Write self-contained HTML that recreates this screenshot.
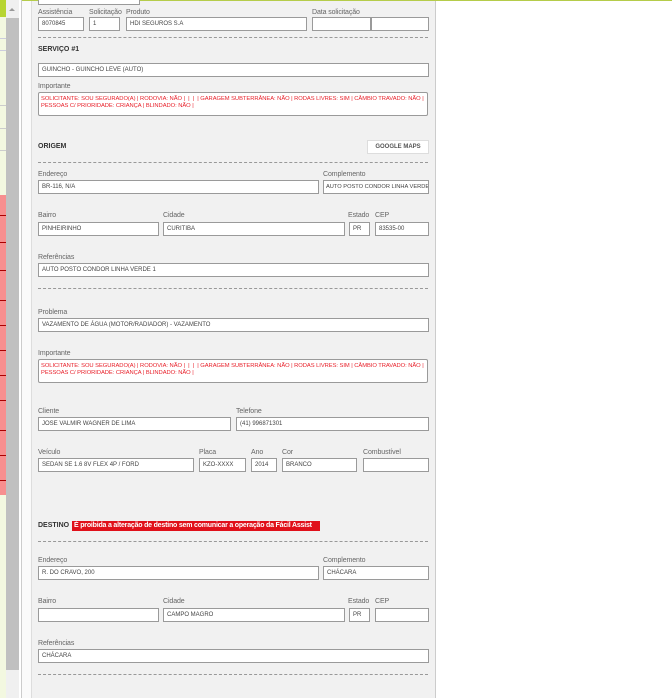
<!DOCTYPE html>
<html><head><meta charset="utf-8"><style>
*{margin:0;padding:0;box-sizing:border-box}
body{width:672px;height:698px;overflow:hidden;background:#fff;font-family:"Liberation Sans",sans-serif;position:relative}
.a{position:absolute}
.l{position:absolute;font-size:7px;color:#666;line-height:8px;white-space:nowrap;letter-spacing:-0.1px}
.i{position:absolute;height:14px;background:#fff;border:1px solid #9a9a9a;font-size:6px;color:#444;line-height:12px;padding-left:3px;white-space:nowrap;overflow:hidden}
.t{position:absolute;height:24px;background:#fff;border:1px solid #9a9a9a;border-radius:2px;font-size:5.8px;color:#e8202a;line-height:7px;padding:3px 2px;left:38px;width:390px;white-space:nowrap;overflow:hidden;letter-spacing:-0.05px}
.d{position:absolute;left:38px;width:390px;border-top:1px dashed #999;height:0}
.h{position:absolute;font-size:7px;font-weight:bold;color:#333;left:38px}
</style></head><body>
<div class="a" style="left:0;top:0;width:6px;height:698px;background:#f3f8e0"></div>
<div class="a" style="left:0;top:0;width:6px;height:17px;background:#b7d531"></div>
<div class="a" style="left:0;top:38px;width:6px;height:1px;background:#ccd"></div>
<div class="a" style="left:0;top:50px;width:6px;height:1px;background:#ccd"></div>
<div class="a" style="left:0;top:105px;width:6px;height:1px;background:#ccc"></div>
<div class="a" style="left:0;top:128px;width:6px;height:1px;background:#ccc"></div>
<div class="a" style="left:0;top:150px;width:6px;height:1px;background:#ccc"></div>
<div class="a" style="left:0;top:195px;width:6px;height:300px;background:#f78f8f"></div>
<div class="a" style="left:0;top:215px;width:6px;height:1px;background:#a00"></div>
<div class="a" style="left:0;top:242px;width:6px;height:1px;background:#a00"></div>
<div class="a" style="left:0;top:270px;width:6px;height:1px;background:#a00"></div>
<div class="a" style="left:0;top:300px;width:6px;height:1px;background:#a00"></div>
<div class="a" style="left:0;top:325px;width:6px;height:1px;background:#a00"></div>
<div class="a" style="left:0;top:350px;width:6px;height:1px;background:#a00"></div>
<div class="a" style="left:0;top:375px;width:6px;height:1px;background:#a00"></div>
<div class="a" style="left:0;top:400px;width:6px;height:1px;background:#a00"></div>
<div class="a" style="left:0;top:430px;width:6px;height:1px;background:#a00"></div>
<div class="a" style="left:0;top:455px;width:6px;height:1px;background:#a00"></div>
<div class="a" style="left:0;top:480px;width:6px;height:1px;background:#a00"></div>
<div class="a" style="left:6px;top:0;width:13px;height:698px;background:#f0f0f0"></div>
<div class="a" style="left:6px;top:18px;width:13px;height:652px;background:#c0c0c0"></div>
<div class="a" style="left:9px;top:8px;width:0;height:0;border-left:3px solid transparent;border-right:3px solid transparent;border-bottom:3px solid #999"></div>
<div class="a" style="left:21px;top:0;width:1px;height:698px;background:#ccc"></div>
<div class="a" style="left:22px;top:0;width:9px;height:698px;background:#fafafa"></div>
<div class="a" style="left:31px;top:0;width:405px;height:698px;background:#f1f1f1;border-left:1px solid #ddd;border-right:1px solid #ccc"></div>
<div class="a" style="left:22px;top:0;width:650px;height:1px;background:#b5cc4a"></div>
<div class="i" style="left:38px;top:-9px;width:102px"></div>

<div class="l" style="left:38px;top:9px">Assistência</div>
<div class="l" style="left:89px;top:9px">Solicitação</div>
<div class="l" style="left:126px;top:9px">Produto</div>
<div class="l" style="left:312px;top:9px">Data solicitação</div>
<div class="i" style="left:38px;top:17px;width:46px">8070845</div>
<div class="i" style="left:89px;top:17px;width:31px">1</div>
<div class="i" style="left:126px;top:17px;width:181px">HDI SEGUROS S.A</div>
<div class="i" style="left:312px;top:17px;width:59px"></div>
<div class="i" style="left:371px;top:17px;width:58px"></div>
<div class="d" style="top:37px"></div>

<div class="h" style="top:46px">SERVIÇO #1</div>
<div class="i" style="left:38px;top:63px;width:391px">GUINCHO - GUINCHO LEVE (AUTO)</div>
<div class="l" style="left:38px;top:83px">Importante</div>
<div class="t" style="top:92px">SOLICITANTE: SOU SEGURADO(A) | RODOVIA: NÃO | &nbsp;| &nbsp;| &nbsp;| GARAGEM SUBTERRÂNEA: NÃO | RODAS LIVRES: SIM | CÂMBIO TRAVADO: NÃO |<br>PESSOAS C/ PRIORIDADE: CRIANÇA | BLINDADO: NÃO |</div>

<div class="h" style="top:143px">ORIGEM</div>
<div class="a" style="left:367px;top:140px;width:62px;height:14px;background:#fff;border:1px solid #ddd;font-size:6px;font-weight:bold;color:#555;text-align:center;line-height:12px">GOOGLE MAPS</div>
<div class="d" style="top:162px"></div>
<div class="l" style="left:38px;top:171px">Endereço</div>
<div class="l" style="left:323px;top:171px">Complemento</div>
<div class="i" style="left:38px;top:180px;width:281px">BR-116, N/A</div>
<div class="i" style="left:323px;top:180px;width:106px;font-size:5.7px;padding-left:2px">AUTO POSTO CONDOR LINHA VERDE</div>
<div class="l" style="left:38px;top:212px">Bairro</div>
<div class="l" style="left:163px;top:212px">Cidade</div>
<div class="l" style="left:348px;top:212px">Estado</div>
<div class="l" style="left:375px;top:212px">CEP</div>
<div class="i" style="left:38px;top:222px;width:121px">PINHEIRINHO</div>
<div class="i" style="left:163px;top:222px;width:182px">CURITIBA</div>
<div class="i" style="left:349px;top:222px;width:21px">PR</div>
<div class="i" style="left:375px;top:222px;width:54px">83535-00</div>
<div class="l" style="left:38px;top:254px">Referências</div>
<div class="i" style="left:38px;top:263px;width:391px">AUTO POSTO CONDOR LINHA VERDE 1</div>
<div class="d" style="top:288px"></div>

<div class="l" style="left:38px;top:309px">Problema</div>
<div class="i" style="left:38px;top:318px;width:391px">VAZAMENTO DE ÁGUA (MOTOR/RADIADOR) - VAZAMENTO</div>
<div class="l" style="left:38px;top:350px">Importante</div>
<div class="t" style="top:359px">SOLICITANTE: SOU SEGURADO(A) | RODOVIA: NÃO | &nbsp;| &nbsp;| &nbsp;| GARAGEM SUBTERRÂNEA: NÃO | RODAS LIVRES: SIM | CÂMBIO TRAVADO: NÃO |<br>PESSOAS C/ PRIORIDADE: CRIANÇA | BLINDADO: NÃO |</div>

<div class="l" style="left:38px;top:408px">Cliente</div>
<div class="l" style="left:236px;top:408px">Telefone</div>
<div class="i" style="left:38px;top:417px;width:193px">JOSE VALMIR WAGNER DE LIMA</div>
<div class="i" style="left:236px;top:417px;width:193px">(41) 996871301</div>
<div class="l" style="left:38px;top:449px">Veículo</div>
<div class="l" style="left:199px;top:449px">Placa</div>
<div class="l" style="left:251px;top:449px">Ano</div>
<div class="l" style="left:282px;top:449px">Cor</div>
<div class="l" style="left:363px;top:449px">Combustível</div>
<div class="i" style="left:38px;top:458px;width:156px">SEDAN SE 1.6 8V FLEX 4P / FORD</div>
<div class="i" style="left:199px;top:458px;width:47px">KZO-XXXX</div>
<div class="i" style="left:251px;top:458px;width:26px">2014</div>
<div class="i" style="left:282px;top:458px;width:75px">BRANCO</div>
<div class="i" style="left:363px;top:458px;width:66px"></div>

<div class="h" style="top:522px">DESTINO</div>
<div class="a" style="left:72px;top:521px;width:248px;height:10px;background:#e0101a;color:#fff;font-size:7px;font-weight:bold;line-height:10px;padding-left:2px;white-space:nowrap;letter-spacing:-0.2px">É proibida a alteração de destino sem comunicar a operação da Fácil Assist</div>
<div class="d" style="top:541px"></div>
<div class="l" style="left:38px;top:557px">Endereço</div>
<div class="l" style="left:323px;top:557px">Complemento</div>
<div class="i" style="left:38px;top:566px;width:281px">R. DO CRAVO, 200</div>
<div class="i" style="left:323px;top:566px;width:106px">CHÁCARA</div>
<div class="l" style="left:38px;top:598px">Bairro</div>
<div class="l" style="left:163px;top:598px">Cidade</div>
<div class="l" style="left:348px;top:598px">Estado</div>
<div class="l" style="left:375px;top:598px">CEP</div>
<div class="i" style="left:38px;top:608px;width:121px"></div>
<div class="i" style="left:163px;top:608px;width:182px">CAMPO MAGRO</div>
<div class="i" style="left:349px;top:608px;width:21px">PR</div>
<div class="i" style="left:375px;top:608px;width:54px"></div>
<div class="l" style="left:38px;top:640px">Referências</div>
<div class="i" style="left:38px;top:649px;width:391px">CHÁCARA</div>
<div class="d" style="top:674px"></div>
</body></html>
